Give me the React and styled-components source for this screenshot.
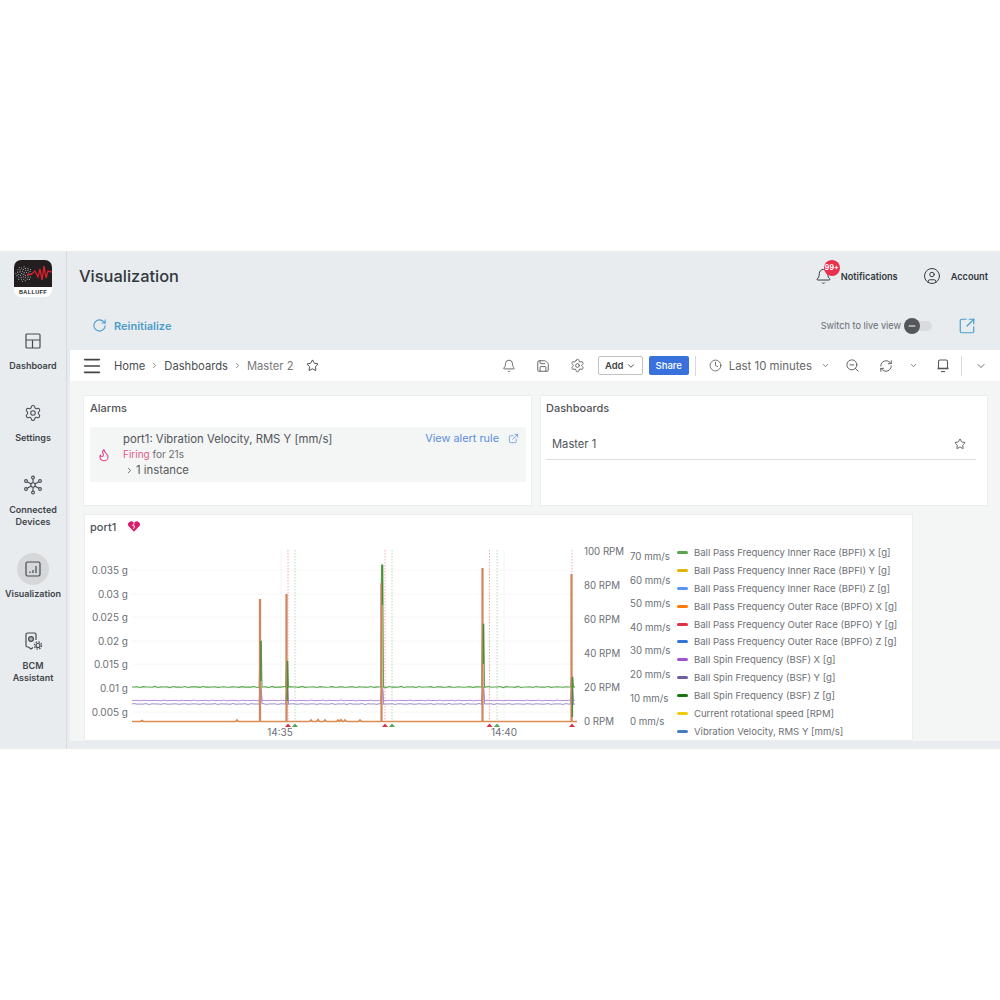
import styled, { createGlobalStyle } from "styled-components";
import {
  Bell,
  ChevronDown,
  ChevronRight,
  CircleUser,
  Clock,
  ExternalLink,
  Flame,
  Menu,
  Minus,
  RefreshCw,
  RotateCw,
  Save,
  Settings,
  SquareArrowOutUpRight,
  Star,
  ZoomOut,
} from "lucide-react";

const GlobalStyle = createGlobalStyle`
  html, body {
    margin: 0;
    background: #fff;
    font-family: Inter, "Noto Sans", "Liberation Sans", sans-serif;
  }
  * { box-sizing: border-box; }
`;

const Page = styled.div`
  width: 1000px;
  height: 1000px;
  padding-top: 251px;
  background: #fff;
  overflow: hidden;
`;

const Shell = styled.div`
  display: flex;
  height: 498px;
  background: #e9ecef;
`;

const Sidebar = styled.aside`
  width: 67px;
  flex-shrink: 0;
  border-right: 1px solid #d9dcdf;
  display: flex;
  flex-direction: column;
  align-items: center;
  padding-top: 9px;
`;

const Logo = styled.div`
  width: 38px;
  height: 37px;
  border-radius: 7px;
  overflow: hidden;
  background: #fff;
  margin-bottom: 28px;
  display: flex;
  flex-direction: column;
  align-items: center;
`;

const LogoText = styled.span`
  font-family: "Liberation Sans", sans-serif;
  font-size: 5.5px;
  line-height: 10px;
  font-weight: 700;
  letter-spacing: 0.4px;
  color: #222;
`;

const NavList = styled.nav`
  display: flex;
  flex-direction: column;
  align-items: center;
  gap: 25px;
`;

const NavItem = styled.div`
  display: flex;
  flex-direction: column;
  align-items: center;
  gap: 3px;
`;

const NavIcon = styled.div`
  width: 32px;
  height: 32px;
  border-radius: 50%;
  display: flex;
  align-items: center;
  justify-content: center;
  color: #444b52;
  background: ${(props) => (props.$active ? "#d5d7d9" : "transparent")};
`;

const NavLabel = styled.div`
  font-size: 9px;
  line-height: 12px;
  font-weight: 600;
  color: #3f444a;
  text-align: center;
  white-space: nowrap;
`;

const Main = styled.main`
  flex: 1;
  min-width: 0;
  display: flex;
  flex-direction: column;
`;

const Header = styled.header`
  height: 99px;
  flex-shrink: 0;
  display: flex;
  flex-direction: column;
`;

const HeaderTop = styled.div`
  height: 50px;
  padding: 0 12px;
  display: flex;
  align-items: center;
`;

const Title = styled.h1`
  margin: 0 auto 0 0;
  font-size: 16.4px;
  font-weight: 500;
  color: #33383d;
`;

const HeaderLink = styled.div`
  position: relative;
  display: flex;
  align-items: center;
  gap: ${(props) => props.$gap}px;
  margin-left: ${(props) => props.$ml || 0}px;
  font-size: 9.2px;
  font-weight: 600;
  color: #33383d;
`;

const Badge = styled.span`
  position: absolute;
  left: 9px;
  top: -8px;
  width: 16px;
  height: 16px;
  border-radius: 50%;
  background: #e8304f;
  color: #fff;
  font-size: 7px;
  font-weight: 700;
  display: flex;
  align-items: center;
  justify-content: center;
`;

const HeaderBottom = styled.div`
  height: 49px;
  padding: 0 24px 0 25px;
  display: flex;
  align-items: center;
`;

const Reinit = styled.div`
  display: flex;
  align-items: center;
  gap: 7px;
  margin-right: auto;
  font-size: 11px;
  font-weight: 600;
  color: #4a9ccb;
`;

const LiveText = styled.span`
  font-size: 9.2px;
  color: #666b70;
  margin-right: 4px;
`;

const Toggle = styled.div`
  position: relative;
  width: 27px;
  height: 10px;
  border-radius: 5px;
  background: #d9dbdd;
  margin-right: 26px;
`;

const Thumb = styled.span`
  position: absolute;
  left: -1px;
  top: -3px;
  width: 16px;
  height: 16px;
  border-radius: 50%;
  background: #55585b;
  color: #fff;
  display: flex;
  align-items: center;
  justify-content: center;
`;

const Body = styled.div`
  flex: 1;
  min-height: 0;
  margin-left: 3px;
  display: flex;
  flex-direction: column;
  background: #f4f5f5;
`;

const Toolbar = styled.div`
  height: 31px;
  flex-shrink: 0;
  background: #fff;
  padding-left: 11px;
  display: flex;
  align-items: center;
  color: #444;
`;

const MenuSlot = styled.div`
  display: flex;
  margin-right: 11px;
`;

const Crumb = styled.span`
  font-size: 11.2px;
  color: ${(props) => (props.$muted ? "#777" : "#4a4e52")};
  margin-right: 5px;
`;

const CrumbSep = styled.span`
  display: flex;
  margin-right: 5px;
  color: #666;
`;

const ToolSlot = styled.div`
  width: ${(props) => props.$w || 34}px;
  margin-left: ${(props) => props.$ml || 0};
  flex-shrink: 0;
  display: flex;
  align-items: center;
  justify-content: center;
  color: #55595d;
`;

const ToolSep = styled.div`
  width: 1px;
  height: 20px;
  background: #d8d9da;
  margin-left: ${(props) => props.$ml || 0}px;
`;

const AddButton = styled.div`
  width: 45px;
  height: 19px;
  margin-left: 3px;
  border: 1px solid #bfc1c3;
  border-radius: 2px;
  font-size: 9.5px;
  font-weight: 600;
  color: #444;
  display: flex;
  align-items: center;
  justify-content: center;
  gap: 2px;
`;

const ShareButton = styled.div`
  width: 40px;
  height: 19px;
  margin-left: 6px;
  border-radius: 2px;
  background: #3871dc;
  color: #fff;
  font-size: 9.5px;
  font-weight: 500;
  display: flex;
  align-items: center;
  justify-content: center;
`;

const RangeText = styled.span`
  margin-left: -7px;
  font-size: 11.4px;
  color: #666;
  white-space: nowrap;
`;

const Content = styled.div`
  flex: 1;
  min-height: 0;
  padding: 14px 12px 0 13px;
  display: flex;
  flex-direction: column;
  gap: 8px;
  overflow: hidden;
`;

const TopRow = styled.div`
  display: grid;
  grid-template-columns: 449px 448px;
  gap: 8px;
  height: 111px;
  flex-shrink: 0;
`;

const Card = styled.section`
  background: #fff;
  border: 1px solid #eceded;
  padding: 6px 5px 6px 6px;
  min-width: 0;
`;

const DashCard = styled(Card)`
  padding-left: 5px;
`;

const CardTitle = styled.div`
  font-size: 11px;
  line-height: 13px;
  font-weight: 500;
  color: #505357;
`;

const AlertRow = styled.div`
  margin-top: 12px;
  height: 55px;
  background: #f4f5f5;
  display: flex;
  align-items: center;
  padding: 0 7px;
`;

const AlertIcon = styled.div`
  width: 26px;
  flex-shrink: 0;
  display: flex;
  color: #e33d85;
`;

const AlertText = styled.div`
  flex: 1;
  min-width: 0;
  display: flex;
  flex-direction: column;
  gap: 2px;
`;

const AlertName = styled.div`
  font-size: 11.3px;
  line-height: 14px;
  color: #50545a;
`;

const AlertState = styled.div`
  font-size: 10px;
  line-height: 13px;
  color: #6a6e72;
`;

const Firing = styled.span`
  color: #e3588f;
`;

const Instance = styled.div`
  display: flex;
  align-items: center;
  gap: 2px;
  padding-left: 2px;
  font-size: 11.3px;
  line-height: 14px;
  color: #56595d;
`;

const AlertLink = styled.div`
  align-self: flex-start;
  margin-top: 4px;
  display: flex;
  align-items: center;
  gap: 9px;
  font-size: 10.9px;
  line-height: 14px;
  color: #5b8fe0;
`;

const DashRow = styled.div`
  margin: 10px 6px 0 0;
  height: 35px;
  padding: 3px 10px 0 6px;
  border-bottom: 1px solid #dcdddf;
  display: flex;
  align-items: center;
  justify-content: space-between;
  font-size: 11.2px;
  color: #50545a;
`;

const ChartCard = styled.section`
  width: 829px;
  height: 227px;
  flex-shrink: 0;
  margin-left: 1px;
  background: #fff;
  border: 1px solid #eceded;
  display: flex;
  flex-direction: column;
`;

const ChartHead = styled.div`
  height: 25px;
  flex-shrink: 0;
  padding: 6px 0 0 5px;
  display: flex;
  gap: 12px;
  font-size: 11px;
  line-height: 13px;
  font-weight: 500;
  color: #505357;
`;

const ChartBody = styled.div`
  flex: 1;
  min-height: 0;
  margin-left: -1px;
  display: flex;
`;

const Plot = styled.svg`
  display: block;
  width: 588px;
  height: 201px;
  flex-shrink: 0;
`;

const Legend = styled.div`
  padding: 4px 0 0 5px;
  display: flex;
  flex-direction: column;
`;

const LegendRow = styled.div`
  height: 17.87px;
  display: flex;
  align-items: center;
  gap: 3px;
  font-size: 9.55px;
  color: #6c7075;
  white-space: nowrap;
`;

const Swatch = styled.span`
  width: 11px;
  height: 3px;
  border-radius: 2px;
  margin-right: 3px;
  background: ${(props) => props.$color};
`;

const BottomStrip = styled.div`
  height: 8px;
  flex-shrink: 0;
  background: #e9ecef;
`;

const LEGEND = [
  ["#56a64b", "Ball Pass Frequency Inner Race (BPFI) X [g]"],
  ["#e0b400", "Ball Pass Frequency Inner Race (BPFI) Y [g]"],
  ["#5794f2", "Ball Pass Frequency Inner Race (BPFI) Z [g]"],
  ["#ff780a", "Ball Pass Frequency Outer Race (BPFO) X [g]"],
  ["#e02f44", "Ball Pass Frequency Outer Race (BPFO) Y [g]"],
  ["#3274d9", "Ball Pass Frequency Outer Race (BPFO) Z [g]"],
  ["#a352cc", "Ball Spin Frequency (BSF) X [g]"],
  ["#705da0", "Ball Spin Frequency (BSF) Y [g]"],
  ["#19730e", "Ball Spin Frequency (BSF) Z [g]"],
  ["#f2cc0c", "Current rotational speed [RPM]"],
  ["#447ebc", "Vibration Velocity, RMS Y [mm/s]"],
];

const LEFT_AXIS = [
  ["0.035 g", 570],
  ["0.03 g", 594],
  ["0.025 g", 617],
  ["0.02 g", 641],
  ["0.015 g", 664],
  ["0.01 g", 688],
  ["0.005 g", 712],
];
const RPM_AXIS = [
  ["100 RPM", 551],
  ["80 RPM", 585],
  ["60 RPM", 619],
  ["40 RPM", 653],
  ["20 RPM", 687],
  ["0 RPM", 721],
];
const MMS_AXIS = [
  ["70 mm/s", 556],
  ["60 mm/s", 580],
  ["50 mm/s", 603],
  ["40 mm/s", 627],
  ["30 mm/s", 650],
  ["20 mm/s", 674],
  ["10 mm/s", 698],
  ["0 mm/s", 721],
];

// x of each spike, where the orange and green traces top out
const SPIKES = [
  { x: 260, orange: 599, green: 641 },
  { x: 286.5, orange: 594, green: 661 },
  { x: 381.5, orange: 583, green: 565 },
  { x: 482.5, orange: 568, green: 624 },
  { x: 571.5, orange: 574, green: 677 },
];

const ALERT_LINES = [
  { x: 288, color: "#e02f44" },
  { x: 295, color: "#56a64b" },
  { x: 385, color: "#e02f44" },
  { x: 392, color: "#56a64b" },
  { x: 489.5, color: "#e02f44" },
  { x: 497, color: "#56a64b" },
  { x: 572, color: "#e02f44" },
];

// noisy flat trace that jumps up to peak at every spike
const tracePath = (base, amp, seed, peak) => {
  let d = `M132 ${base}`;
  for (let x = 134; x <= 577; x += 3) {
    const y = base + amp * Math.sin(x * 0.83 + seed) * Math.cos(x * 0.19 + seed);
    d += ` L${x} ${y.toFixed(2)}`;
    const spike = SPIKES.find((s) => s.x >= x && s.x < x + 3);
    if (spike && peak) {
      d += ` L${spike.x - 0.8} ${base} L${spike.x} ${peak(spike)} L${spike.x + 1.2} ${peak(spike)} L${spike.x + 2} ${base}`;
    }
  }
  return d;
};

const BUMPS = [
  [142, 1],
  [237, 1.5],
  [311, 1.5],
  [318, 2],
  [325, 1.5],
  [338, 1.5],
  [341, 2],
  [345, 1.5],
  [360, 1.5],
];

const orangePath = () => {
  let d = "M132 721.5";
  BUMPS.forEach(([x, h]) => {
    d += ` L${x - 1.5} 721.5 L${x} ${721.5 - h} L${x + 1.5} 721.5`;
  });
  return d + " L577 721.5";
};

const Chart = () => (
  <Plot viewBox="84 540 588 201">
    {LEFT_AXIS.map(([, y]) => (
      <line key={y} x1="132" x2="577" y1={y} y2={y} stroke="#f6f6f7" strokeWidth="1" />
    ))}
    <line x1="281" x2="281" y1="550" y2="720" stroke="#f4f4f4" />
    <line x1="504" x2="504" y1="550" y2="720" stroke="#f4f4f4" />
    {ALERT_LINES.map((l) => (
      <g key={l.x}>
        <line x1={l.x} x2={l.x} y1="550" y2="720" stroke={l.color} strokeOpacity="0.5" strokeWidth="0.8" strokeDasharray="1.5 1.5" />
        <polygon points={`${l.x - 3},727 ${l.x + 3},727 ${l.x},723.5`} fill={l.color} />
      </g>
    ))}
    <path d={tracePath(700.5, 0.5, 1, () => 687)} fill="none" stroke="#b98ad8" strokeWidth="1" />
    <path d={tracePath(704, 0.5, 3, () => 690)} fill="none" stroke="#9d8fc4" strokeWidth="1" />
    <path d={tracePath(687, 0.6, 2, (s) => s.green)} fill="none" stroke="#56a64b" strokeWidth="1.1" />
    <path d={orangePath()} fill="#a9805a" stroke="#dc8c52" strokeWidth="1.6" />
    {SPIKES.map((s) => (
      <g key={s.x}>
        <rect x={s.x - 1.1} y={s.orange} width="2.2" height={721 - s.orange} fill="#d2845c" />
        <rect x={s.x + 0.2} y={s.green} width="1.4" height={Math.min(40, 721 - s.green)} fill="#4f8a3c" />
      </g>
    ))}
    <g fontFamily="Inter, sans-serif" fontSize="9.7" fill="#6c7075">
      {LEFT_AXIS.map(([label, y]) => (
        <text key={label} x="128" y={y + 3.5} fontSize="10" textAnchor="end">{label}</text>
      ))}
      {RPM_AXIS.map(([label, y]) => (
        <text key={label} x="584" y={y + 3.5}>{label}</text>
      ))}
      {MMS_AXIS.map(([label, y]) => (
        <text key={label} x="630" y={y + 3.5}>{label}</text>
      ))}
      <text x="280" y="736" fontSize="10" textAnchor="middle">14:35</text>
      <text x="504" y="736" fontSize="10" textAnchor="middle">14:40</text>
    </g>
  </Plot>
);

const BrandMark = () => (
  <svg width="38" height="27" viewBox="0 0 38 27">
    <rect width="38" height="27" fill="#231f20" />
    {Array.from({ length: 42 }).map((_, i) => {
      const a = i * 2.4;
      const r = 1.2 * Math.sqrt(i);
      return <circle key={i} cx={10 + r * Math.cos(a) * 1.1} cy={14 + r * Math.sin(a)} r="0.55" fill="#b9bcc0" />;
    })}
    <path d="M13 15 L18 14 L21 11 L24 17 L26 9 L28 20 L30 6 L32 18 L34 11 L38 12" fill="none" stroke="#e0202c" strokeWidth="1.3" />
  </svg>
);

const DashboardIcon = () => (
  <svg width="16" height="16" viewBox="0 0 16 16" fill="none" stroke="currentColor" strokeWidth="1.2">
    <rect x="1" y="1" width="14" height="14" rx="1" />
    <path d="M1 7h14M7.5 7v8" />
  </svg>
);

const HubIcon = () => (
  <svg width="20" height="20" viewBox="0 0 20 20" fill="none" stroke="currentColor" strokeWidth="1.1">
    <circle cx="10" cy="10" r="2.2" />
    <circle cx="10" cy="2.5" r="1.4" />
    <circle cx="10" cy="17.5" r="1.4" />
    <circle cx="3" cy="6" r="1.4" />
    <circle cx="17" cy="6" r="1.4" />
    <circle cx="3" cy="14" r="1.4" />
    <circle cx="17" cy="14" r="1.4" />
    <path d="M10 4v3.8M10 12.2V16M4.2 6.8l3.9 2.1M15.8 6.8l-3.9 2.1M4.2 13.2l3.9-2.1M15.8 13.2l-3.9-2.1" />
  </svg>
);

const ChartIcon = () => (
  <svg width="16" height="16" viewBox="0 0 16 16" fill="none" stroke="currentColor" strokeWidth="1.2">
    <rect x="1" y="1" width="14" height="14" rx="1.5" />
    <path d="M5 12v-1.5M8 12V9M11 12V5" />
  </svg>
);

const AssistantIcon = () => (
  <svg width="20" height="20" viewBox="0 0 20 20" fill="none" stroke="currentColor" strokeWidth="1.2">
    <path d="M10 16.5 L8 18 L5.5 16 H4.5 A1.5 1.5 0 0 1 3 14.5 V3.5 A1.5 1.5 0 0 1 4.5 2 H11.5 A1.5 1.5 0 0 1 13 3.5 V9" />
    <circle cx="8" cy="8" r="2.4" fill="currentColor" fillOpacity="0.35" />
    <circle cx="15" cy="14.5" r="2" />
    <circle cx="15" cy="14.5" r="3.6" strokeDasharray="1.6 1.2" />
  </svg>
);

const BrokenHeart = () => (
  <svg width="12" height="11" viewBox="0 0 12 11">
    <path d="M6 10.8 L1 5.6 A3 3 0 0 1 1.2 1.2 A3 3 0 0 1 5.4 1.2 L6 1.8 L6.6 1.2 A3 3 0 0 1 10.8 1.2 A3 3 0 0 1 11 5.6 Z" fill="#d81b6a" />
    <path d="M6.4 1.8 L4.6 4.6 L6.8 5 L5.4 8" fill="none" stroke="#fff" strokeWidth="0.9" />
  </svg>
);

// the screen-with-thick-base icon of the toolbar
const KioskIcon = () => (
  <svg width="14" height="14" viewBox="0 0 14 14" fill="none" stroke="currentColor" strokeWidth="1.1">
    <path d="M2.5 9.5V2.5A1.5 1.5 0 0 1 4 1H10A1.5 1.5 0 0 1 11.5 2.5V9.5" />
    <path d="M1.5 9.5H12.5" strokeWidth="1.6" />
    <path d="M5 12.6H9" />
  </svg>
);

const NAV = [
  { label: "Dashboard", icon: <DashboardIcon /> },
  { label: "Settings", icon: <Settings size={18} strokeWidth={1.4} /> },
  { label: "Connected\nDevices", icon: <HubIcon /> },
  { label: "Visualization", icon: <ChartIcon />, active: true },
  { label: "BCM\nAssistant", icon: <AssistantIcon /> },
];

const App = () => {
  return (
    <Page>
      <GlobalStyle />
      <Shell>
        <Sidebar>
          <Logo>
            <BrandMark />
            <LogoText>BALLUFF</LogoText>
          </Logo>
          <NavList>
            {NAV.map((item) => (
              <NavItem key={item.label}>
                <NavIcon $active={item.active}>{item.icon}</NavIcon>
                <NavLabel>
                  {item.label.split("\n").map((line) => (
                    <div key={line}>{line}</div>
                  ))}
                </NavLabel>
              </NavItem>
            ))}
          </NavList>
        </Sidebar>
        <Main>
          <Header>
            <HeaderTop>
              <Title>Visualization</Title>
              <HeaderLink $gap={9}>
                <Bell size={17} strokeWidth={1.4} />
                <Badge>99+</Badge>
                Notifications
              </HeaderLink>
              <HeaderLink $gap={10} $ml={25}>
                <CircleUser size={18} strokeWidth={1.3} />
                Account
              </HeaderLink>
            </HeaderTop>
            <HeaderBottom>
              <Reinit>
                <RotateCw size={15} strokeWidth={1.7} />
                Reinitialize
              </Reinit>
              <LiveText>Switch to live view</LiveText>
              <Toggle>
                <Thumb>
                  <Minus size={10} strokeWidth={2.5} />
                </Thumb>
              </Toggle>
              <SquareArrowOutUpRight size={18} strokeWidth={1.6} color="#4a9fd0" />
            </HeaderBottom>
          </Header>
          <Body>
            <Toolbar>
              <MenuSlot><Menu size={22} strokeWidth={1.8} /></MenuSlot>
              <Crumb>Home</Crumb>
              <CrumbSep><ChevronRight size={9} strokeWidth={2} /></CrumbSep>
              <Crumb>Dashboards</Crumb>
              <CrumbSep><ChevronRight size={9} strokeWidth={2} /></CrumbSep>
              <Crumb $muted>Master 2</Crumb>
              <ToolSlot $w={27}><Star size={13} strokeWidth={1.5} color="#222" /></ToolSlot>
              <ToolSlot $w={34} $ml="auto"><Bell size={14} strokeWidth={1.5} /></ToolSlot>
              <ToolSlot $w={35}><Save size={14} strokeWidth={1.5} /></ToolSlot>
              <ToolSlot $w={34}><Settings size={15} strokeWidth={1.4} /></ToolSlot>
              <AddButton>Add <ChevronDown size={10} strokeWidth={2.2} /></AddButton>
              <ShareButton>Share</ShareButton>
              <ToolSep $ml={6} />
              <ToolSlot $w={40}><Clock size={13} strokeWidth={1.5} /></ToolSlot>
              <RangeText>Last 10 minutes</RangeText>
              <ToolSlot $w={26}><ChevronDown size={9} strokeWidth={2} /></ToolSlot>
              <ToolSlot $w={28}><ZoomOut size={15} strokeWidth={1.5} /></ToolSlot>
              <ToolSlot $w={40}><RefreshCw size={14} strokeWidth={1.6} /></ToolSlot>
              <ToolSlot $w={14}><ChevronDown size={9} strokeWidth={2} /></ToolSlot>
              <ToolSlot $w={36} $ml="5px"><KioskIcon /></ToolSlot>
              <ToolSep />
              <ToolSlot $w={38}><ChevronDown size={12} strokeWidth={1.8} /></ToolSlot>
            </Toolbar>
            <Content>
              <TopRow>
                <Card>
                  <CardTitle>Alarms</CardTitle>
                  <AlertRow>
                    <AlertIcon><Flame size={14} strokeWidth={1.8} /></AlertIcon>
                    <AlertText>
                      <AlertName>port1: Vibration Velocity, RMS Y [mm/s]</AlertName>
                      <AlertState><Firing>Firing</Firing> for 21s</AlertState>
                      <Instance><ChevronRight size={9} strokeWidth={2.4} /> 1 instance</Instance>
                    </AlertText>
                    <AlertLink>View alert rule <ExternalLink size={11} strokeWidth={1.6} /></AlertLink>
                  </AlertRow>
                </Card>
                <DashCard>
                  <CardTitle>Dashboards</CardTitle>
                  <DashRow>
                    Master 1
                    <Star size={12} strokeWidth={1.5} color="#333" />
                  </DashRow>
                </DashCard>
              </TopRow>
              <ChartCard>
                <ChartHead>
                  port1
                  <BrokenHeart />
                </ChartHead>
                <ChartBody>
                  <Chart />
                  <Legend>
                    {LEGEND.map(([color, name]) => (
                      <LegendRow key={name}>
                        <Swatch $color={color} />
                        {name}
                      </LegendRow>
                    ))}
                  </Legend>
                </ChartBody>
              </ChartCard>
            </Content>
            <BottomStrip />
          </Body>
        </Main>
      </Shell>
    </Page>
  );
};

export default App;
